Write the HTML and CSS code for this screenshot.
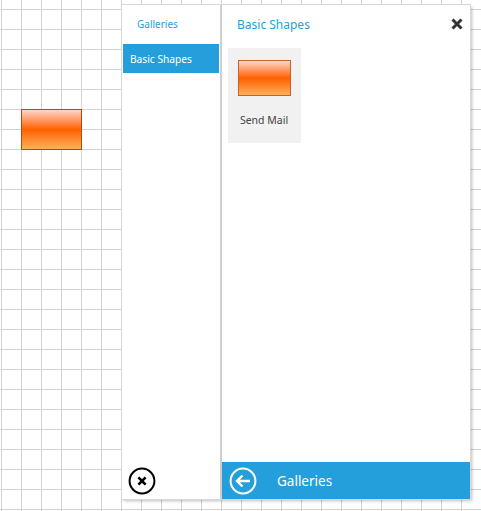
FILE: index.html
```html
<!DOCTYPE html>
<html lang="en">
<head>
    <meta charset="UTF-8">
    <title>Basic Shapes</title>
    <link rel="stylesheet" href="styles.css">
</head>
<body>
    <div class="canvas">
        <div class="shape canvas-shape"></div>

        <div class="flyout">
            <div class="nav-pane">
                <div class="nav-title">Galleries</div>
                <div class="nav-item">Basic Shapes</div>
                <div class="nav-footer">
                    <svg class="round-icon" width="28" height="28" viewBox="0 0 28 28">
                        <circle cx="14" cy="14" r="12.4" fill="none" stroke="#000" stroke-width="2"/>
                        <path d="M10.4 10.4l7.2 7.2M17.6 10.4l-7.2 7.2" fill="none" stroke="#000" stroke-width="2.6"/>
                    </svg>
                </div>
            </div>
            <div class="detail-pane">
                <div class="detail-header">
                    <span class="detail-title">Basic Shapes</span>
                    <svg class="close-icon" width="12" height="12" viewBox="0 0 12 12">
                        <path d="M1.5 1.5l9 9M10.5 1.5l-9 9" fill="none" stroke="#333" stroke-width="3"/>
                    </svg>
                </div>
                <div class="detail-body">
                    <div class="tile">
                        <div class="shape tile-shape"></div>
                        <div class="tile-label">Send Mail</div>
                    </div>
                </div>
                <div class="detail-footer">
                    <svg class="round-icon" width="28" height="28" viewBox="0 0 28 28">
                        <circle cx="14" cy="14" r="12.4" fill="none" stroke="#fff" stroke-width="2"/>
                        <path d="M21 14H8M13.5 8.5L8 14l5.5 5.5" fill="none" stroke="#fff" stroke-width="2.4"/>
                    </svg>
                    <span class="footer-label">Galleries</span>
                </div>
            </div>
        </div>
    </div>
</body>
</html>
```

FILE: styles.css
```css
/* page and grid */
html, body {
    margin: 0;
    height: 100%;
    overflow: hidden;
    background-color: #fff;
}
.canvas {
    position: relative;
    width: 481px;
    height: 511px;
    font-family: "Noto Sans", "Open Sans", sans-serif;
    background-image:
        linear-gradient(to right, #d2d2d2 1px, transparent 1px),
        linear-gradient(to bottom, #d2d2d2 1px, transparent 1px);
    background-size: 20px 20px;
    background-position: 1px 9px;
}

/* the orange rectangle, on the canvas and in the tile */
.shape {
    box-sizing: border-box;
    border: 1px solid #b5480c;
    background: linear-gradient(to bottom, #ffd6cc 0%, #ff6000 50%, #ffb05c 100%);
}
.canvas-shape {
    position: absolute;
    left: 21px;
    top: 109px;
    width: 61px;
    height: 41px;
}

/* flyout */
.flyout {
    position: absolute;
    left: 122px;
    top: 5px;
    width: 348px;
    height: 494px;
    display: flex;
    background-color: #fff;
    box-shadow: 0 0 0 1px #d8d8d8, 2px 2px 3px rgba(0, 0, 0, 0.25);
}
.nav-pane {
    width: 98px;
    display: flex;
    flex-direction: column;
    border-right: 2px solid #cfcfcf;
}
.nav-title {
    padding: 12px 0 0 15px;
    height: 27px;
    font-size: 10px;
    line-height: 14px;
    color: #259fdb;
}
.nav-item {
    margin: 0 1px;
    height: 29px;
    padding-left: 7px;
    font-size: 10.2px;
    line-height: 30px;
    color: #fff;
    background-color: #259fdb;
}
.nav-footer {
    margin-top: auto;
    padding: 0 0 4px 6px;
}
.round-icon {
    display: block;
}

/* detail side */
.detail-pane {
    flex: 1;
    display: flex;
    flex-direction: column;
}
.detail-header {
    height: 38px;
    padding: 0 7px 1px 15px;
    display: flex;
    justify-content: space-between;
    align-items: center;
}
.detail-title {
    font-size: 12px;
    color: #259fdb;
}
.detail-body {
    flex: 1;
    padding: 4px 6px;
}
.tile {
    width: 73px;
    height: 95px;
    padding-top: 12px;
    box-sizing: border-box;
    background-color: #f1f1f1;
}
.tile-shape {
    width: 53px;
    height: 36px;
    margin-left: 10px;
    border-color: #c9602a;
}
.tile-label {
    margin-top: 17px;
    padding-right: 1px;
    font-size: 10.5px;
    line-height: 14px;
    text-align: center;
    color: #444;
}
.detail-footer {
    height: 37px;
    padding-left: 7px;
    display: flex;
    align-items: center;
    background-color: #259fdb;
}
.footer-label {
    margin-left: 20px;
    font-size: 13.5px;
    color: #fff;
}
```
